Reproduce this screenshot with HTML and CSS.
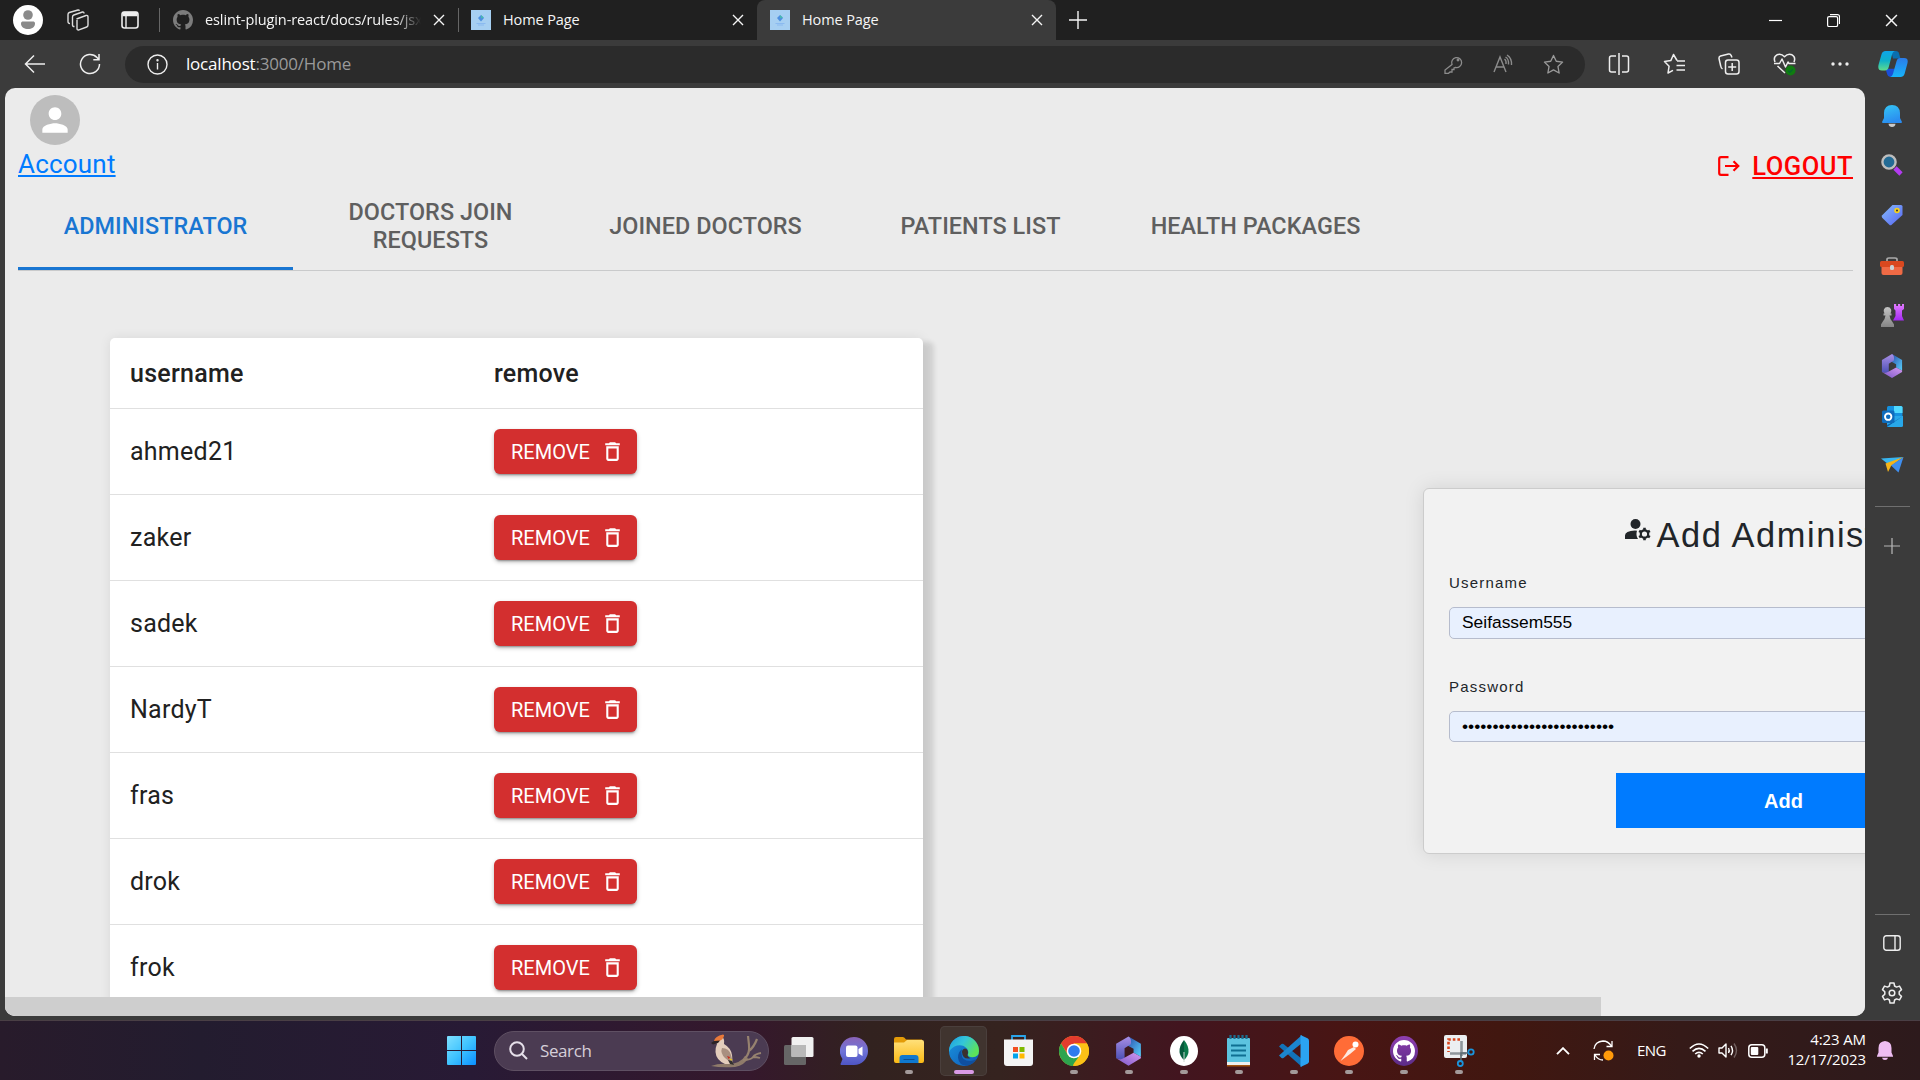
FILE: index.html
```html
<!DOCTYPE html>
<html lang="en">
<head>
<meta charset="utf-8">
<title>Home Page</title>
<link rel="stylesheet" href="styles.css">
</head>
<body>
<svg class="defs" width="0" height="0">
  <defs>
    <linearGradient id="gBlue" x1="0" y1="0" x2="1" y2="1"><stop offset="0" stop-color="#7fe0ff"/><stop offset=".5" stop-color="#3fc3ff"/><stop offset="1" stop-color="#0a8fff"/></linearGradient>
    <linearGradient id="gBell" x1="0" y1="0" x2=".4" y2="1"><stop offset="0" stop-color="#35c8f5"/><stop offset="1" stop-color="#2a8cf0"/></linearGradient>
    <linearGradient id="gTag" x1="0" y1="0" x2="1" y2="1"><stop offset="0" stop-color="#86bdfb"/><stop offset="1" stop-color="#5663f2"/></linearGradient>
    <linearGradient id="gCopA" x1="0" y1="0" x2="0" y2="1"><stop offset="0" stop-color="#0fa5e9"/><stop offset=".5" stop-color="#0fb0c9"/><stop offset="1" stop-color="#5fdc8c"/></linearGradient>
    <linearGradient id="gCopB" x1="0" y1="0" x2="0" y2="1"><stop offset="0" stop-color="#2b7be8"/><stop offset="1" stop-color="#17b4fb"/></linearGradient>
    <linearGradient id="gOffA" x1="0" y1="0" x2="0" y2="1"><stop offset="0" stop-color="#a98fe6"/><stop offset="1" stop-color="#4a4fb4"/></linearGradient>
    <linearGradient id="gOffB" x1="0" y1="0" x2="1" y2="1"><stop offset="0" stop-color="#2a4aa8"/><stop offset="1" stop-color="#58d0fb"/></linearGradient>
    <linearGradient id="gOffC" x1="0" y1="1" x2="1" y2="0"><stop offset="0" stop-color="#7a55c7"/><stop offset="1" stop-color="#d49af0"/></linearGradient>
    <linearGradient id="gEdgeA" x1="0" y1="0" x2="1" y2=".5"><stop offset="0" stop-color="#1c9be0"/><stop offset=".5" stop-color="#34c6d8"/><stop offset="1" stop-color="#5ce45a"/></linearGradient>
    <linearGradient id="gEdgeB" x1="0" y1="0" x2="1" y2="1"><stop offset="0" stop-color="#1a95e0"/><stop offset="1" stop-color="#0f58b4"/></linearGradient>
    <linearGradient id="gChat" x1="0" y1="0" x2="0" y2="1"><stop offset="0" stop-color="#8a63b8"/><stop offset=".5" stop-color="#6f74d8"/><stop offset="1" stop-color="#4e55c4"/></linearGradient>
    <linearGradient id="gFold" x1="0" y1="0" x2="0" y2="1"><stop offset="0" stop-color="#ffe07a"/><stop offset="1" stop-color="#fbb914"/></linearGradient>
    <linearGradient id="gPurple" x1="0" y1="0" x2="0" y2="1"><stop offset="0" stop-color="#e27bff"/><stop offset="1" stop-color="#a32af2"/></linearGradient>
    <linearGradient id="gGrey" x1="0" y1="0" x2="0" y2="1"><stop offset="0" stop-color="#c4c4c4"/><stop offset="1" stop-color="#858585"/></linearGradient>
    <linearGradient id="gGh" x1="0" y1="0" x2="0" y2="1"><stop offset="0" stop-color="#8f3fb0"/><stop offset="1" stop-color="#5b2c86"/></linearGradient>
    <symbol id="close" viewBox="0 0 12 12"><path d="M1 1l10 10M11 1L1 11" fill="none" stroke="currentColor" stroke-width="1.4"/></symbol>
    <symbol id="plus" viewBox="0 0 18 18"><path d="M9 0v18M0 9h18" fill="none" stroke="currentColor" stroke-width="1.4"/></symbol>
    <symbol id="favicon" viewBox="0 0 20 20"><path fill="#a6cff2" d="M0 0h20v20H0z"/><path fill="#4d8fe0" d="M10 5l3 3-3 3.500L7 8z"/><path fill="#48b8b0" d="M10 5l3 2.500-3 1z"/><path fill="#8abaf0" d="M5.500 13h9v1h-9zM7 14.600h6v.8H7z"/></symbol>
    <symbol id="cat" viewBox="0 0 16 16"><path fill="currentColor" d="M8 0C3.580 0 0 3.580 0 8c0 3.540 2.290 6.530 5.470 7.590.4.070.55-.17.55-.38 0-.19-.01-.82-.01-1.490-2.010.37-2.530-.49-2.690-.94-.09-.23-.48-.94-.82-1.130-.28-.15-.68-.52-.01-.53.63-.01 1.080.58 1.230.82.72 1.210 1.870.87 2.330.66.07-.52.28-.87.51-1.070-1.780-.2-3.640-.89-3.640-3.950 0-.87.31-1.590.82-2.150-.08-.2-.36-1.020.08-2.120 0 0 .67-.21 2.200.82.64-.18 1.320-.27 2-.27s1.360.09 2 .27c1.530-1.040 2.200-.82 2.200-.82.44 1.100.16 1.920.08 2.120.51.56.82 1.270.82 2.150 0 3.070-1.870 3.750-3.650 3.950.29.25.54.73.54 1.480 0 1.070-.01 1.930-.01 2.200 0 .21.15.46.55.38A8.010 8.010 0 0 0 16 8c0-4.420-3.580-8-8-8z"/></symbol>
    <symbol id="trash" viewBox="0 0 24 24"><path fill="currentColor" d="M6 19c0 1.100.9 2 2 2h8c1.100 0 2-.9 2-2V7H6v12zM8 9h8v10H8V9zm7.500-5l-1-1h-5l-1 1H5v2h14V4z"/></symbol>
    <symbol id="person" viewBox="0 0 24 24"><path fill="currentColor" d="M12 12c2.210 0 4-1.790 4-4s-1.790-4-4-4-4 1.790-4 4 1.790 4 4 4zm0 2c-2.670 0-8 1.340-8 4v2h16v-2c0-2.660-5.330-4-8-4z"/></symbol>
    <symbol id="office" viewBox="0 0 24 26"><path fill="url(#gOffB)" d="M12 0l11 6.500V18l-6.500-3.500V11L11 8z"/><path fill="url(#gOffA)" d="M12 0L1 6.500v13l5.500 1.500q2 0 2-2v-8.500L14 7q1-5-2-7z"/><path fill="url(#gOffC)" d="M1 19.500q4 1.500 6.500 0l9-5L23 18v1.500L12 26z"/></symbol>
  </defs>
</svg>

<div class="browser">
  <header class="tabstrip">
    <div class="cell profile"><span class="profile-dot"><svg width="16" height="20" viewBox="0 0 16 20"><circle cx="8" cy="5" r="4.800" fill="#8a8a8a"/><path d="M1 13.500c0-1.600 1-2 2-2h10c1 0 2 .4 2 2 0 4-3.500 5.500-7 5.500s-7-1.500-7-5.500z" fill="#8a8a8a"/></svg></span></div>
    <div class="cell work"><svg width="22" height="22" viewBox="0 0 22 22" fill="none" stroke="#ddd" stroke-width="1.400" stroke-linejoin="round"><path d="M9.500 10l9.500-3.500q2-.5 2 1.500v8q0 1.500-1.300 2l-7.700 2.800q-2 .6-2-1.300V11"/><path d="M7.500 17.500q-2 .2-2-1.800V8q0-1.500 1.300-2l8.700-3q1.500-.2 1.500 1.500"/><path d="M3 14.500q-2 0-2-2V5.500q0-1.500 1.300-2L11 1q1-.3 1.500.7"/></svg></div>
    <div class="cell vert"><svg width="18" height="18" viewBox="0 0 18 18" fill="none" stroke="#eee" stroke-width="1.600"><rect x="1" y="1" width="16" height="16" rx="2.500"/><path d="M1.500 3h15" stroke-width="4.500"/><path d="M5 5v12" stroke-width="1.400"/></svg></div>
    <i class="vsep"></i>
    <div class="tab first"><svg class="cat" width="20" height="20"><use href="#cat"/></svg><span class="fade">eslint-plugin-react/docs/rules/jsx</span><svg class="x" width="12" height="12"><use href="#close"/></svg></div>
    <i class="vsep"></i>
    <div class="tab"><svg width="20" height="20"><use href="#favicon"/></svg><span>Home Page</span><svg class="x" width="12" height="12"><use href="#close"/></svg></div>
    <div class="tab active"><svg width="20" height="20"><use href="#favicon"/></svg><span>Home Page</span><svg class="x" width="12" height="12"><use href="#close"/></svg></div>
    <div class="cell newtab"><svg width="18" height="18"><use href="#plus"/></svg></div>
    <div class="window">
      <svg width="13" height="13" viewBox="0 0 13 13"><path d="M0 6.500h13" stroke="#fff" stroke-width="1.200"/></svg>
      <svg width="13" height="13" viewBox="0 0 13 13" fill="none" stroke="#fff" stroke-width="1.200"><rect x=".6" y="2.600" width="10" height="10" rx="1.500"/><path d="M3 .6h7.500q2 0 2 2V10"/></svg>
      <svg width="13" height="13"><use href="#close"/></svg>
    </div>
  </header>

  <div class="toolbar">
    <div class="nav">
      <svg width="22" height="20" viewBox="0 0 22 20" fill="none" stroke="#eee" stroke-width="1.500"><path d="M21 10H1.500M10 1.500L1.500 10l8.500 8.500"/></svg>
      <svg width="22" height="22" viewBox="0 0 22 22" fill="none" stroke="#eee" stroke-width="1.500"><path d="M20.500 11A9.500 9.500 0 1 1 18 4.600L19.800 6.500M20 1v5.700h-5.700"/></svg>
    </div>
    <div class="address">
      <svg width="21" height="21" viewBox="0 0 21 21" fill="none" stroke="#eee" stroke-width="1.400"><circle cx="10.500" cy="10.500" r="9.500"/><path d="M10.500 9v6.500"/><circle cx="10.500" cy="6.300" r=".5" fill="#eee"/></svg>
      <span class="url">localhost<em>:3000/Home</em></span>
      <div class="pageicons">
        <svg width="19" height="19" viewBox="0 0 19 19" fill="none" stroke="#8c8c8c" stroke-width="1.300"><path d="M8 9.500a5 5 0 1 1 3.500 3L10 13v1.500H8V17H6l-1.500 1.300H1V15z"/><circle cx="14" cy="5" r=".8"/></svg>
        <svg width="20" height="20" viewBox="0 0 20 20" fill="none" stroke="#8c8c8c" stroke-width="1.400"><path d="M1 18L7 3l6 15M3 13h8M11.500 5q2 1.500 1.500 5M12.500 3q3.500 2 3 7.500M14 1q5 3 4.500 10"/></svg>
        <svg width="21" height="21" viewBox="0 0 22 22" fill="none" stroke="#9a9a9a" stroke-width="1.400" stroke-linejoin="round"><path d="M11 1.500l2.900 6.100 6.600.9-4.800 4.700 1.200 6.700-5.900-3.200-5.900 3.200 1.200-6.700L1.500 8.500l6.600-.9z"/></svg>
      </div>
    </div>
    <div class="actions">
      <svg width="22" height="22" viewBox="0 0 22 22" fill="none" stroke="#eee" stroke-width="1.500"><path d="M8 3H3.500q-2 0-2 2v12q0 2 2 2H8M14 3h4.500q2 0 2 2v12q0 2-2 2H14M11 0v22"/></svg>
      <svg width="22" height="22" viewBox="0 0 22 22" fill="none" stroke="#eee" stroke-width="1.500" stroke-linejoin="round"><path d="M14 7.500L10.500 1.500 7.800 7.600 1.500 8.500l4.600 4.700L5 20l5-2.700M14 8h8M13.500 12.500H22M13.500 17H22"/></svg>
      <svg width="22" height="22" viewBox="0 0 22 22" fill="none" stroke="#eee" stroke-width="1.500" stroke-linejoin="round"><rect x="7.500" y="7" width="13.500" height="14" rx="2.500"/><path d="M14.200 10v8M10.200 14h8M4.500 16Q3 15 2.700 13L1 5.500Q.8 3.500 2.500 3l8-2q2-.4 2.600 1.400L14 4.500"/></svg>
      <svg width="24" height="24" viewBox="0 0 24 24" fill="none" stroke="#eee" stroke-width="1.500" stroke-linejoin="round"><path d="M2 10Q0 5 4 2.800q4-1.800 7.500 2Q15 1 19 2.800q4 2.200 2 7.200M4.500 14L12 21M1 11.500h5.500L9 7l3.500 8 2.500-5 1 1.500h6.500"/><circle cx="17.500" cy="18.500" r="5" fill="#107c10" stroke="none"/><path d="M15.200 18.700l1.600 1.600 3-3" stroke="#063" stroke-width="1.200"/></svg>
      <svg width="18" height="4" viewBox="0 0 18 4" fill="#eee"><circle cx="2" cy="2" r="1.700"/><circle cx="9" cy="2" r="1.700"/><circle cx="16" cy="2" r="1.700"/></svg>
      <svg width="30" height="26" viewBox="0 0 32 28"><path fill="#1a4fd8" d="M8 19h10l-2 7q-.8 2-3 2-2.500 0-3.300-3z"/><path fill="#0a6fae" d="M14 0h5q3 0 3.600 3L24 8h-8z"/><path fill="url(#gCopA)" d="M8 0h10q-2 .6-2.800 3L11.500 17q-1 4-4 4H4q-5 0-3.500-6.500L3.500 4Q4.500 0 8 0z"/><path fill="url(#gCopB)" d="M24 28H13q2-.6 2.800-3l4-14q1-3.500 4-3.500H28q5 0 3.500 6l-3 11Q27.300 28 24 28z"/></svg>
    </div>
  </div>

  <div class="middle">
    <main class="page">
      <div class="topbar">
        <div class="account"><span class="avatar"><svg width="38" height="38"><use href="#person"/></svg></span><a>Account</a></div>
        <div class="logout"><svg width="22" height="20" viewBox="0 0 22 20" fill="none" stroke="red" stroke-width="2.200"><path d="M10.500 1.200H3Q1.200 1.200 1.200 3v14q0 1.800 1.800 1.800h7.500M7 10h13M15.500 5.200l4.800 4.800-4.800 4.800"/></svg><a>LOGOUT</a></div>
      </div>
      <nav class="sections">
        <span class="current">ADMINISTRATOR</span><span>DOCTORS JOIN REQUESTS</span><span>JOINED DOCTORS</span><span>PATIENTS LIST</span><span>HEALTH PACKAGES</span>
      </nav>
      <div class="panel">
        <div class="table">
          <div class="row head"><span>username</span><span>remove</span></div>
          <div class="row"><span>ahmed21</span><button>REMOVE<svg width="25" height="25"><use href="#trash"/></svg></button></div>
          <div class="row"><span>zaker</span><button>REMOVE<svg width="25" height="25"><use href="#trash"/></svg></button></div>
          <div class="row"><span>sadek</span><button>REMOVE<svg width="25" height="25"><use href="#trash"/></svg></button></div>
          <div class="row"><span>NardyT</span><button>REMOVE<svg width="25" height="25"><use href="#trash"/></svg></button></div>
          <div class="row"><span>fras</span><button>REMOVE<svg width="25" height="25"><use href="#trash"/></svg></button></div>
          <div class="row"><span>drok</span><button>REMOVE<svg width="25" height="25"><use href="#trash"/></svg></button></div>
          <div class="row"><span>frok</span><button>REMOVE<svg width="25" height="25"><use href="#trash"/></svg></button></div>
        </div>
        <form class="form">
          <h2><svg width="26" height="22" viewBox="0 0 26 22"><g fill="#212529"><circle cx="10.500" cy="5" r="5"/><path d="M0 20v-3.500Q0 12 10 11.500q1.500 0 2 .2-1.500 4.500 1 8.300z"/></g><circle cx="19.500" cy="15" r="3.700" fill="none" stroke="#212529" stroke-width="2.200"/><path stroke="#212529" stroke-width="2.600" d="M19.500 11.500V8.800M19.500 18.500v2.700M22.500 13.200l2.400-1.400M16.500 16.800l-2.400 1.400M22.500 16.800l2.400 1.400M16.500 13.200l-2.400-1.400"/></svg>Add Administrator</h2>
          <label>Username</label>
          <div class="field">Seifassem555</div>
          <label class="second">Password</label>
          <div class="field pass">•••••••••••••••••••••••••</div>
          <button type="button">Add</button>
        </form>
      </div>
      <div class="scroll"><i></i></div>
    </main>

    <aside class="side">
      <svg width="22" height="22" viewBox="0 0 22 22"><path fill="url(#gBell)" d="M11 0q7.500 0 8 8v5l2 4q0 1-1 1H2q-1 0-1-1l2-4V8q.5-8 8-8z"/><path fill="#c9c9c9" d="M7.500 18.800h7Q14 22 11 22t-3.500-3.200z"/></svg>
      <svg width="22" height="22" viewBox="0 0 22 22"><path d="M14 14l6 6" stroke="#b33bf0" stroke-width="4.600"/><circle cx="8" cy="8" r="6.600" fill="#236b95" stroke="#bdbdbd" stroke-width="2.400"/></svg>
      <svg width="22" height="22" viewBox="0 0 22 22"><path fill="url(#gTag)" d="M11.500 1H20q1.500 0 1.500 1.500V11L10.700 20.800q-1.200 1-2.400 0L1.200 13.700q-1-1.200 0-2.400z"/><circle cx="16" cy="6.500" r="2.800" fill="#f5d020"/><circle cx="16" cy="6.500" r="1" fill="#333"/></svg>
      <svg width="24" height="18" viewBox="0 0 24 18"><path fill="none" stroke="#aaa" stroke-width="1.700" d="M7 5V2.500Q7 1 9 1h6q2 0 2 1.500V5"/><rect x="1.500" y="6" width="21" height="12" rx="2" fill="#ef6a45"/><rect y="4" width="24" height="6" rx="1.500" fill="#d9481f"/><rect x="10" y="8" width="4" height="5" rx="1.500" fill="#c9d3d6"/></svg>
      <svg width="24" height="24" viewBox="0 0 24 24"><path fill="url(#gPurple)" d="M14 1h2.200v2h1.800V1h2.200v2H22V1h2v5l-2 1.500V13l2 4.500H13L15.500 13V7.500L14 6z"/><path fill="url(#gGrey)" d="M7.500 4a4 4 0 0 1 3 6.500h1v2h-2q.5 4 3 6.500l1.500 2.500V24H1v-2.500L2.500 19q2.500-2.500 3-6.500h-2v-2h1A4 4 0 0 1 7.500 4z"/></svg>
      <svg width="22" height="24"><use href="#office"/></svg>
      <svg width="21" height="21" viewBox="0 0 21 21"><path fill="#1490df" d="M5 1.500Q5 0 6.500 0H19q1.500 0 1.500 1.500V10H5z"/><path fill="#50d9ff" d="M12 0h7q1.500 0 1.500 1.500V7H12z"/><path fill="#28a8ea" d="M5 10h16v9.500q0 1.500-1.500 1.500H5z"/><path fill="#0a5fa8" d="M21 10l-8 5-8 4v2z"/><rect y="4.500" width="12.500" height="12.500" rx="1.500" fill="#0f6cbd"/><circle cx="6.200" cy="10.700" r="3.200" fill="none" stroke="#fff" stroke-width="1.900"/></svg>
      <svg width="23" height="16" viewBox="0 0 23 16"><path fill="#38b6f0" d="M0 1.500L22.500 0 7 7z"/><path fill="#f5b51a" d="M22.500 0L4.500 6.500 7 15l3-6z"/><path fill="#3f8ff0" d="M22.500 0L10 8.500l7.500 7z"/></svg>
      <i class="hsep"></i>
      <svg class="dim" width="16" height="16"><use href="#plus"/></svg>
      <div class="bottom">
        <i class="hsep"></i>
        <svg width="18" height="16" viewBox="0 0 18 16" fill="none" stroke="#eee" stroke-width="1.400"><rect x=".8" y=".8" width="16.400" height="14.400" rx="2.500"/><path d="M12 1v14"/></svg>
        <svg width="22" height="22" viewBox="0 0 22 22" fill="none" stroke="#eee" stroke-width="1.500" stroke-linejoin="round"><path d="M9 1h4l.6 3 1.900 1.100 3-1 2 3.500-2.300 2.200v2.400l2.300 2.200-2 3.500-3-1-1.900 1.100L13 21H9l-.6-3-1.900-1.100-3 1-2-3.500 2.300-2.200V9.800L1.500 7.600l2-3.500 3 1L8.400 4z"/><circle cx="11" cy="11" r="2.800"/></svg>
      </div>
    </aside>
  </div>
</div>

<footer class="taskbar">
  <div class="apps">
    <svg class="start" width="29" height="29" viewBox="0 0 29 29" fill="url(#gBlue)"><path d="M0 1q0-1 1-1h13v14H0zM15 0h13q1 0 1 1v13H15zM0 15h14v14H1q-1 0-1-1zM15 15h14v13q0 1-1 1H15z"/></svg>
    <div class="search">
      <svg width="19" height="19" viewBox="0 0 19 19" fill="none" stroke="#e6e0ea" stroke-width="2"><circle cx="8" cy="8" r="6.800"/><path d="M13 13l5 5"/></svg>
      <span>Search</span>
      <svg class="bird" width="52" height="34" viewBox="0 0 52 34"><path fill="#8f7b6a" d="M0 32q8-3 18-2 12-1 16-8l3 2q-3 7-13 9-14 1-24-1z"/><path fill="none" stroke="#96826f" stroke-width="2.200" d="M34 24q5-4 4-13L37 2M38 17q5-4 8-12"/><path fill="none" stroke="#96826f" stroke-width="1.800" d="M32 26q8 0 10-3t8-4M42 23q4 0 7 1"/><path fill="#e3cdbc" d="M5 8Q5 3 10 2q4 2 3 8 7 4 8 11t-1 9h-6Q5 26 4.500 18 4.500 13 6 10z"/><path fill="#a88f80" d="M11 14q7 0 9 7l2 8q-5-2-8-5-5-5-3-10z"/><path fill="#e8793a" d="M3 7Q4 2 12 .5q1.500 0 1 1.500-1 4-5 5z"/><path fill="#2b2325" d="M0 9l3-2 6-.5-2 2.500-5 1.500z"/><path fill="#c8281e" d="M16 22l3 1-1 2.500z"/><path fill="#e8c51f" d="M18 24l3.500 1.500L20 27z"/><path fill="#33302f" d="M17 26l4 1 2 4-4-1z"/></svg>
    </div>
    <div class="app view"><svg width="30" height="28" viewBox="0 0 30 28"><rect y="8" width="22" height="20" rx="1.500" fill="#666"/><rect x="7.500" width="22" height="20" rx="1.500" fill="#f1f1f1"/><path fill="#b9b9b9" d="M7.500 8H22v12H7.500z"/></svg></div>
    <div class="app"><svg width="28" height="28" viewBox="0 0 28 28"><path fill="url(#gChat)" d="M14 0a14 14 0 1 1 0 28H1q-1-1 0-2l1.500-4A14 14 0 0 1 14 0z"/><rect x="6" y="8.500" width="11.500" height="11.500" rx="2" fill="#fff"/><path fill="#fff" d="M18.500 12l4-2.500v9.500l-4-2.500z"/></svg></div>
    <div class="app run"><svg width="30" height="27" viewBox="0 0 30 27"><path fill="#e39b08" d="M0 2q0-2 2-2h7q1.500 0 3 2.500h16V8H0z"/><path fill="url(#gFold)" d="M0 5.500h10l3-2.500h15q2 0 2 2v19q0 2-2 2H2q-2 0-2-2z"/><path fill="#0f78cf" d="M5.500 26v-5q0-3 3-3h13q3 0 3 3v5z"/><path stroke="#0a4f94" d="M9.500 22.500h11"/></svg></div>
    <div class="app on"><svg width="30" height="30" viewBox="0 0 30 30"><circle cx="15" cy="15" r="15" fill="url(#gEdgeB)"/><path fill="url(#gEdgeA)" d="M.3 12A15 15 0 0 1 30 15q0 6-6.500 6.300-5 0-4.500-3 1-3-1-5.800Q14 8 8 9.500 2.500 11 0 16z"/><path fill="#0f4f9e" d="M12.500 17q0 8 8.500 8 3 0 6-1.800Q24 28.500 18 29.700q-8 0-9-8 0-6 4-8.500-.5 2-.5 3.800z"/><path fill="#3b302e" d="M13 16q0-3 3-3.500 3 .5 3 4 0 1.500-.6 2.500 0 2 3 3.300-8 1.500-8.400-6.300z"/></svg></div>
    <div class="app"><svg width="29" height="31" viewBox="0 0 29 31"><path fill="none" stroke="#2aa5ea" stroke-width="1.800" d="M8 6V1h13v5"/><path fill="#f4f4f4" d="M0 4.500h29V28q0 3-3 3H3q-3 0-3-3z"/><path fill="#f25022" d="M9 12h5v5H9z"/><path fill="#7fba00" d="M15.500 12h5v5h-5z"/><path fill="#00a4ef" d="M9 18.500h5v5H9z"/><path fill="#ffb900" d="M15.500 18.500h5v5h-5z"/></svg></div>
    <div class="app run"><svg width="30" height="30" viewBox="0 0 30 30"><circle cx="15" cy="15" r="15" fill="#fbc116"/><path fill="#e33b2e" d="M2 7.500A15 15 0 0 1 28 7.500H15l-6 11z"/><path fill="#2da44e" d="M2 7.500L9 19l6 3.500L14 30A15 15 0 0 1 2 7.500z"/><path fill="#2da44e" d="M13 30l8.500-11.500L15 20z"/><path fill="#fbc116" d="M21 19l-6 11a15 15 0 0 0 13-22.500H15z"/><circle cx="15" cy="15" r="7.300" fill="#fff"/><circle cx="15" cy="15" r="5.800" fill="#2f7bee"/></svg></div>
    <div class="app run"><svg width="27" height="30"><use href="#office"/></svg></div>
    <div class="app run"><svg width="28" height="30" viewBox="0 0 28 30"><ellipse cx="14" cy="15" rx="14" ry="15" fill="#fff"/><path fill="#0b7a4b" d="M14 4q5 6 4.500 12-.5 4.500-4.500 8z"/><path fill="#055a3c" d="M14 4q-5 6-4.500 12 .5 4.500 4.500 8z"/><path stroke="#c9d6cf" d="M14 16v10"/></svg></div>
    <div class="app run"><svg width="23" height="32" viewBox="0 0 23 32"><rect y="3" width="23" height="27" rx="1" fill="#5cc3df"/><path fill="#eee" d="M0 27h23v3H0z"/><path fill="#a3520c" d="M0 30h23v1.500H0z"/><path stroke="#0e6f92" stroke-width="1.800" d="M4 10.500h15M4 15.500h15M4 20.500h15"/><path stroke="#1b6d8f" stroke-width="2.200" d="M3.500 0v4M7.500 0v4M11.500 0v4M15.500 0v4M19.500 0v4"/></svg></div>
    <div class="app run"><svg width="30" height="32" viewBox="0 0 30 32"><path fill="#1272b8" d="M0 11.500L2.500 9q1-.5 2 0L23 24v8z"/><path fill="#1c85cf" d="M0 20.500L2.500 23q1 .5 2 0L23 8V0z"/><path fill="#2ba3f2" d="M21.500 0l7 3.200q1.500.8 1.500 2.500v20.600q0 1.700-1.500 2.500l-7 3.200z"/></svg></div>
    <div class="app run"><svg width="30" height="30" viewBox="0 0 30 30"><circle cx="15" cy="15" r="15" fill="#ff6c37"/><circle cx="21.500" cy="8.500" r="3" fill="#fff"/><path fill="#fde9e0" d="M20 11l2 2-6 5-4 3-5.500 4 5-7 2.500-4z"/></svg></div>
    <div class="app run"><svg width="28" height="30" viewBox="0 0 28 30"><ellipse cx="14" cy="15" rx="14" ry="15" fill="url(#gGh)"/><svg x="3" y="4" width="22" height="22" color="#fff"><use href="#cat"/></svg></svg></div>
    <div class="app run"><svg class="snip" width="31" height="32" viewBox="0 0 31 32"><rect width="23" height="23" rx="2" fill="#eceff1"/><path fill="none" stroke="#d8431a" stroke-width="2.600" stroke-dasharray="2.600 2" d="M16 4.500H4.500V17"/><path stroke="#8f979c" stroke-width="2.600" d="M17.500 6v15M6 18.500h16"/><path fill="none" stroke="#5b6a72" stroke-width="1.600" d="M17 26v-8h8"/><circle cx="27" cy="17" r="2.700" fill="none" stroke="#1a94dc" stroke-width="1.800"/><circle cx="16.300" cy="28.500" r="2.500" fill="none" stroke="#1a94dc" stroke-width="1.800"/></svg></div>
  </div>
  <div class="tray">
    <svg class="chev" width="14" height="8" viewBox="0 0 14 8" fill="none" stroke="#fff" stroke-width="1.900"><path d="M1 7.200l6-6 6 6"/></svg>
    <svg class="sync" width="21" height="21" viewBox="0 0 21 21" fill="none" stroke="#fff" stroke-width="1.300"><path d="M1 9Q2 1.500 10 1q5 0 8.500 5M19 1v5.500h-5.500M10 20q-5 0-8-5M1.500 20v-5.500H7"/><circle cx="15.500" cy="15.500" r="5" fill="#ff9a0a" stroke="none"/></svg>
    <span class="lang">ENG</span>
    <svg class="wifi" width="20" height="15" viewBox="0 0 20 15" fill="none" stroke="#fff" stroke-width="1.600"><path d="M.8 5.500Q10-3.500 19.200 5.500M3.500 8.300q6.500-6 13 0M6.200 11q3.800-3.400 7.600 0"/><circle cx="10" cy="13" r="1.700" fill="#fff" stroke="none"/></svg>
    <svg class="vol" width="20" height="17" viewBox="0 0 20 17" fill="none" stroke="#fff" stroke-width="1.400" stroke-linejoin="round"><path d="M1 6h3l4-4v13l-4-4H1zM10.500 6q1.500 2.500 0 5M13 3.800q3 4.700 0 9.400"/><path d="M16 1.500q5 7 0 14" opacity=".3"/></svg>
    <svg class="bat" width="20" height="14" viewBox="0 0 20 14" fill="none" stroke="#fff" stroke-width="1.500"><rect x=".8" y=".8" width="16" height="12.400" rx="3"/><rect x="2.800" y="3" width="7.500" height="8" rx="1" fill="#fff" stroke="none"/><path d="M18.800 4.500v5" stroke-width="2"/></svg>
    <div class="clock"><span>4:23 AM</span><span>12/17/2023</span></div>
    <svg class="notif" width="16" height="19" viewBox="0 0 16 19" fill="#eebdf2"><path d="M8 0q6.500.5 6.500 7v4.500L16 15v.8H0V15l1.500-3.500V7Q1.500.5 8 0zM5 16.800h6Q10.500 19 8 19t-3-2.200z"/></svg>
  </div>
</footer>
</body>
</html>
```
FILE: styles.css
```css
* { box-sizing: border-box; }
body { margin: 0; width: 1920px; height: 1080px; overflow: hidden; background: #3b3b3b; font-family: "Open Sans", "Noto Sans", sans-serif; }
svg { display: block; flex: none; }
.defs { position: absolute; }
.browser { height: 1020px; display: flex; flex-direction: column; }

/* tab strip */
.tabstrip { height: 40px; background: #202020; display: flex; align-items: stretch; color: #f5f5f5; font-size: 14.5px; letter-spacing: -0.1px; }
.cell { display: flex; align-items: center; justify-content: center; }
.profile { width: 56px; }
.profile-dot { width: 30px; height: 30px; border-radius: 50%; background: #fff; display: flex; align-items: center; justify-content: center; }
.work { width: 43px; }
.vert { width: 61px; margin-right: -1px; }
.vsep { width: 1px; height: 24px; background: #666; align-self: center; }
.tab { width: 298px; display: flex; align-items: center; padding: 0 13px 0 12px; gap: 12px; white-space: nowrap; }
.tab span { padding-bottom: 2px; }
.tab.first { padding-left: 13px; }
.tab.active { width: 299px; background: #3b3b3b; border-radius: 8px 8px 0 0; padding-left: 13px; }
.tab .x { margin-left: auto; }
.cat { color: #7c7c7c; }
.fade { width: 218px; overflow: hidden; -webkit-mask-image: linear-gradient(90deg, #000 88%, transparent 100%); mask-image: linear-gradient(90deg, #000 88%, transparent 100%); }
.newtab { width: 44px; }
.window { margin-left: auto; display: flex; align-items: center; gap: 45px; padding-right: 22px; }

/* toolbar */
.toolbar { height: 48px; display: flex; align-items: center; }
.nav { width: 125px; display: flex; gap: 33px; padding-left: 24px; align-items: center; }
.address { width: 1460px; height: 37px; border-radius: 19px; background: #2b2b2b; display: flex; align-items: center; padding: 0 21px 0 22px; }
.url { margin-left: 18px; padding-bottom: 2px; font-size: 17px; letter-spacing: -0.2px; color: #fff; }
.url em { font-style: normal; color: #9a9a9a; }
.pageicons { margin-left: auto; display: flex; gap: 30px; align-items: center; }
.actions { display: flex; align-items: center; gap: 33px; padding-left: 23px; }
.actions svg:nth-child(5) { margin: 0 -4px 0 1px; }

/* viewport and sidebar */
.middle { flex: 1; display: flex; padding-left: 5px; }
.page { position: relative; width: 1860px; height: 928px; background: #ebebeb; border-radius: 10px; overflow: hidden; padding: 0 12px 0 13px; font-family: Roboto, sans-serif; color: #212121; }
.side { width: 55px; height: 932px; display: flex; flex-direction: column; align-items: center; padding: 17px 1px 16px 0; }
.side > svg + svg { margin-top: 28px; }
.side > svg:nth-child(2) { margin-top: 27px; }
.side > svg:nth-child(4) { margin-top: 31px; }
.side > svg:nth-child(6) { margin-top: 27px; }
.side > svg:nth-child(8) { margin-top: 30px; }
.hsep { width: 35px; height: 1px; background: #6f6f6f; }
.side > .hsep { margin-top: 33px; }
.side > .dim { margin-top: 31px; color: #b5b5b5; }
.bottom { margin-top: auto; display: flex; flex-direction: column; align-items: center; }
.bottom svg:nth-child(2) { margin-top: 20px; }
.bottom svg:nth-child(3) { margin-top: 31px; }

/* page header */
.topbar { height: 94px; display: flex; justify-content: space-between; }
.account { padding-top: 7px; }
.avatar { width: 50px; height: 50px; margin-left: 12px; border-radius: 50%; background: #bdbdbd; color: #fff; display: flex; align-items: center; justify-content: center; }
.account a { display: block; font-size: 26px; line-height: 38px; letter-spacing: 0.2px; color: #007bff; text-decoration: underline; }
.logout { display: flex; align-items: center; height: 38px; margin-top: 59px; gap: 12px; color: red; font-size: 25.5px; font-weight: 500; letter-spacing: 0.5px; }
.logout a { text-decoration: underline; }
.sections { height: 89px; display: flex; border-bottom: 1px solid #c9cacb; font-size: 23.4px; font-weight: 500; letter-spacing: 0.05px; line-height: 28px; color: #5f5f5f; text-align: center; }
.sections span { width: 275px; padding: 0 45px; display: flex; align-items: center; justify-content: center; white-space: normal; }
.sections span:not(:nth-child(2)) { padding: 0; }
.sections .current { color: #1976d2; box-shadow: inset 0 -3px #1976d2; }

/* administrators table */
.panel { display: flex; align-items: flex-start; margin-top: 67px; padding-left: 92px; }
.table { flex: none; width: 813px; background: #fff; border-radius: 5px; box-shadow: 11px 4px 5px rgba(0,0,0,.11), 0 0 12px rgba(0,0,0,.08); }
.row { height: 86px; display: grid; grid-template-columns: 364px 1fr; align-items: center; justify-items: start; padding-left: 20px; border-bottom: 1px solid #e0e0e0; font-size: 25px; letter-spacing: 0.25px; }
.row.head { height: 71px; padding-top: 1px; font-weight: 500; font-size: 25px; }
.row button { width: 143px; height: 45px; border: 0; border-radius: 6px; background: #d32f2f; color: #fff; font: 400 20px Roboto, sans-serif; display: flex; align-items: center; gap: 10px; padding: 0 0 0 17px; box-shadow: 0 3px 2px -2px rgba(0,0,0,.3), 0 2px 4px rgba(0,0,0,.25); }

/* add form */
.form { flex: none; width: 721px; height: 366px; margin: 150px 0 0 500px; padding: 25px; background: #f2f2f2; border: 1px solid #ccc; border-radius: 6px; box-shadow: 0 0 20px rgba(0,0,0,.1); font-family: "Liberation Sans", sans-serif; letter-spacing: 1.56px; color: #212529; }
.form h2 { margin: 0 0 16px; padding-left: 12px; height: 42px; font-size: 34.4px; font-weight: 400; line-height: 42px; display: flex; justify-content: center; gap: 6px; white-space: nowrap; }
.form h2 svg { margin-top: 5px; }
.form label { display: block; height: 21px; line-height: 21px; font-size: 15px; letter-spacing: 1.2px; }
.form .second { margin-top: 37px; }
.field { height: 32px; margin-top: 14px; padding: 0 12px; line-height: 29px; border: 1px solid #b6bccd; border-radius: 5px; background: #e8f0fe; color: #000; font-size: 17.4px; letter-spacing: 0; }
.field.pass { height: 31px; }
.form button { display: block; width: 335px; height: 55px; margin: 31px auto 0; padding: 2px 0 0; border: 0; background: #007bff; color: #fff; font: 700 20px "Liberation Sans", sans-serif; }
.scroll { position: absolute; left: 0; right: 0; bottom: 0; height: 19px; background: #ebebeb; }
.scroll i { display: block; width: 1596px; height: 19px; background: #cecece; }

/* taskbar */
.taskbar { height: 60px; display: flex; align-items: center; border-top: 1px solid #4a3f45; background: linear-gradient(90deg, #281b2b 0, #231c2f 200px, #281a35 470px, #35182c 750px, #32221f 870px, #35231f 1000px, #42151f 1180px, #481514 1340px, #411710 1500px, #351a18 1680px, #2d1a1c 1920px); }
.apps { display: flex; align-items: center; height: 58px; padding-left: 447px; }
.search { width: 275px; height: 40px; margin-left: 18px; border-radius: 20px; border: 1px solid #5f5063; background: #4b3b52; display: flex; align-items: center; padding: 0 5px 0 14px; color: #d6cfd9; font-size: 17px; }
.search span { margin-left: 12px; padding-bottom: 1px; letter-spacing: -0.4px; }
.bird { margin-left: auto; }
.app { position: relative; width: 47px; height: 50px; margin-left: 8px; border-radius: 5px; display: flex; align-items: center; justify-content: center; }
.app.view { margin-left: 6px; }
.app.run::after, .app.on::after { content: ""; position: absolute; bottom: 2px; left: 20px; width: 8px; height: 4px; border-radius: 2px; background: #a39a9a; }
.app.on { background: #40342f; box-shadow: inset 0 0 0 1px #4a3f3c; }
.app.on::after { left: 14px; width: 20px; background: #d99ae6; }
.snip { margin-left: 1px; }
.tray { margin-left: auto; display: flex; align-items: center; color: #fff; padding-right: 27px; }
.lang { margin: 0 23px; padding-bottom: 1px; font-size: 15px; letter-spacing: -0.5px; }
.sync { margin-left: 23px; }
.vol { margin-left: 9px; }
.bat { margin-left: 10px; }
.clock { margin-left: 20px; width: 78px; padding-bottom: 3px; display: flex; flex-direction: column; align-items: flex-end; font-size: 15px; line-height: 20px; letter-spacing: -0.1px; }
.notif { margin-left: 11px; }
```
